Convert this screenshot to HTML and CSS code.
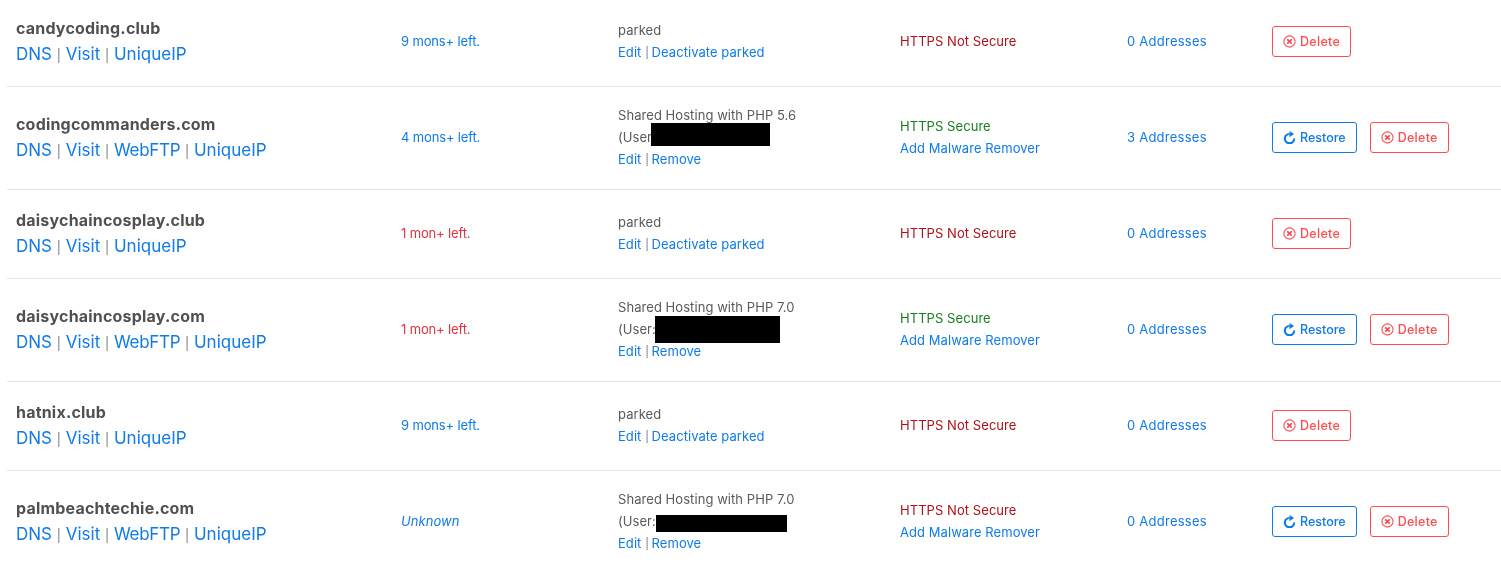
FILE: index.html
```html
<!DOCTYPE html>
<html lang="en">
<head>
<meta charset="utf-8">
<title>Domains</title>
<link rel="stylesheet" href="styles.css">
</head>
<body>
<svg class="defs" width="0" height="0">
  <symbol id="i-x" viewBox="0 0 14 14"><circle cx="7" cy="7" r="6" fill="none" stroke="currentColor" stroke-width="1.2"/><path d="M4.6 4.6l4.8 4.8M9.4 4.6l-4.8 4.8" fill="none" stroke="currentColor" stroke-width="1.9"/></symbol>
  <symbol id="i-r" viewBox="0 0 14 14"><path d="M12 8.2A5 5 0 1 1 7 3.2" fill="none" stroke="currentColor" stroke-width="2.3"/><path d="M7 0v6.6l5-3.3z" fill="currentColor"/></symbol>
</svg>
<main class="list">
  <div class="row">
    <div class="cell"><div class="name">candycoding.club</div><div class="tools"><a>DNS</a> <i>|</i> <a>Visit</a> <i>|</i> <a>UniqueIP</a></div></div>
    <div class="cell term"><a>9 mons+ left.</a></div>
    <div class="cell"><div>parked</div><div class="acts"><a>Edit</a> <i>|</i> <a>Deactivate parked</a></div></div>
    <div class="cell"><span class="bad">HTTPS Not Secure</span></div>
    <div class="cell"><a class="addr">0 Addresses</a></div>
    <div class="cell btns"><button class="btn del"><svg class="ic"><use href="#i-x"/></svg><span class="lbl">Delete</span></button></div>
  </div>
  <div class="row">
    <div class="cell"><div class="name">codingcommanders.com</div><div class="tools"><a>DNS</a> <i>|</i> <a>Visit</a> <i>|</i> <a class="ftp">WebFTP</a> <i>|</i> <a>UniqueIP</a></div></div>
    <div class="cell term"><a>4 mons+ left.</a></div>
    <div class="cell"><div>Shared Hosting with PHP 5.6</div><div class="user">(User:<span class="redact r1"></span></div><div class="acts"><a>Edit</a> <i>|</i> <a>Remove</a></div></div>
    <div class="cell"><div class="good">HTTPS Secure</div><div><a>Add Malware Remover</a></div></div>
    <div class="cell"><a class="addr">3 Addresses</a></div>
    <div class="cell btns"><button class="btn res"><svg class="ic"><use href="#i-r"/></svg>Restore</button><button class="btn del"><svg class="ic"><use href="#i-x"/></svg><span class="lbl">Delete</span></button></div>
  </div>
  <div class="row">
    <div class="cell"><div class="name">daisychaincosplay.club</div><div class="tools"><a>DNS</a> <i>|</i> <a>Visit</a> <i>|</i> <a>UniqueIP</a></div></div>
    <div class="cell term"><span class="warn">1 mon+ left.</span></div>
    <div class="cell"><div>parked</div><div class="acts"><a>Edit</a> <i>|</i> <a>Deactivate parked</a></div></div>
    <div class="cell"><span class="bad">HTTPS Not Secure</span></div>
    <div class="cell"><a class="addr">0 Addresses</a></div>
    <div class="cell btns"><button class="btn del"><svg class="ic"><use href="#i-x"/></svg><span class="lbl">Delete</span></button></div>
  </div>
  <div class="row">
    <div class="cell"><div class="name">daisychaincosplay.com</div><div class="tools"><a>DNS</a> <i>|</i> <a>Visit</a> <i>|</i> <a class="ftp">WebFTP</a> <i>|</i> <a>UniqueIP</a></div></div>
    <div class="cell term"><span class="warn">1 mon+ left.</span></div>
    <div class="cell"><div>Shared Hosting with PHP 7.0</div><div class="user">(User:<span class="redact r2"></span></div><div class="acts"><a>Edit</a> <i>|</i> <a>Remove</a></div></div>
    <div class="cell"><div class="good">HTTPS Secure</div><div><a>Add Malware Remover</a></div></div>
    <div class="cell"><a class="addr">0 Addresses</a></div>
    <div class="cell btns"><button class="btn res"><svg class="ic"><use href="#i-r"/></svg>Restore</button><button class="btn del"><svg class="ic"><use href="#i-x"/></svg><span class="lbl">Delete</span></button></div>
  </div>
  <div class="row">
    <div class="cell"><div class="name">hatnix.club</div><div class="tools"><a>DNS</a> <i>|</i> <a>Visit</a> <i>|</i> <a>UniqueIP</a></div></div>
    <div class="cell term"><a>9 mons+ left.</a></div>
    <div class="cell"><div>parked</div><div class="acts"><a>Edit</a> <i>|</i> <a>Deactivate parked</a></div></div>
    <div class="cell"><span class="bad">HTTPS Not Secure</span></div>
    <div class="cell"><a class="addr">0 Addresses</a></div>
    <div class="cell btns"><button class="btn del"><svg class="ic"><use href="#i-x"/></svg><span class="lbl">Delete</span></button></div>
  </div>
  <div class="row last">
    <div class="cell"><div class="name">palmbeachtechie.com</div><div class="tools"><a>DNS</a> <i>|</i> <a>Visit</a> <i>|</i> <a class="ftp">WebFTP</a> <i>|</i> <a>UniqueIP</a></div></div>
    <div class="cell"><a class="unknown">Unknown</a></div>
    <div class="cell"><div>Shared Hosting with PHP 7.0</div><div class="user">(User:<span class="redact r3"></span></div><div class="acts"><a>Edit</a> <i>|</i> <a>Remove</a></div></div>
    <div class="cell"><div class="bad">HTTPS Not Secure</div><div><a>Add Malware Remover</a></div></div>
    <div class="cell"><a class="addr">0 Addresses</a></div>
    <div class="cell btns"><button class="btn res"><svg class="ic"><use href="#i-r"/></svg>Restore</button><button class="btn del"><svg class="ic"><use href="#i-x"/></svg><span class="lbl">Delete</span></button></div>
  </div>
</main>
</body>
</html>
```
FILE: styles.css
```css
html, body { margin: 0; padding: 0; background: #fff; height: 571px; overflow: hidden; }
body { font-family: Inter, "Liberation Sans", sans-serif; font-size: 13px; line-height: 22px; letter-spacing: .06px; color: #5a5a5a; }
.defs { position: absolute; }
.list { padding: 0 0 0 7px; margin-top: -2px; will-change: transform; }
.row { display: grid; grid-template-columns: 385px 217px 282px 227px 145px 1fr; align-items: center; padding: 17px 0 19px; border-bottom: 1px solid #e4e4ea; }
.row.last { border-bottom: 0; }
.cell { padding-left: 9px; }
a { color: #0f7be8; }
i { font-style: normal; font-size: 11px; line-height: 0; color: #777; }
.acts i { margin-right: -1px; }
.term { letter-spacing: -.15px; }
.addr { letter-spacing: .25px; }
.name { font-size: 16px; line-height: 26px; font-weight: 700; letter-spacing: .2px; color: #505050; }
.tools { font-size: 17px; line-height: 26px; letter-spacing: 0; }
.tools i { font-size: 12.5px; }
.ftp { letter-spacing: -.3px; }
.warn { color: #e5323e; }
.bad { color: #b01116; }
.good { color: #14801f; }
.unknown { font-style: italic; }
.user { position: relative; }
.redact { position: absolute; background: #000; }
.r1 { left: 33px; top: -3px; width: 119px; height: 23px; }
.r2 { left: 37px; top: -2px; width: 125px; height: 27px; }
.r3 { left: 38px; top: 5px; width: 131px; height: 17px; }
.btns { display: flex; gap: 13px; }
.btn { display: inline-flex; align-items: center; gap: 4px; height: 31px; padding: 0 10px; background: #fff; border: 1px solid; border-radius: 3px; font: 500 12.5px Inter, "Liberation Sans", sans-serif; }
.lbl { letter-spacing: .3px; }
.del { color: #ff4d4f; border-color: #ff4d4f; }
.res { color: #0f7be8; border-color: #0f7be8; }
.ic { width: 13px; height: 13px; }
```
